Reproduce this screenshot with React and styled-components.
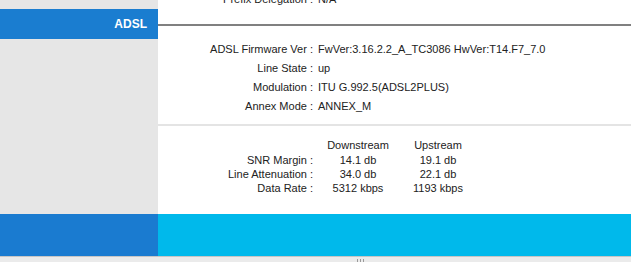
import React from "react";
import styled, { createGlobalStyle } from "styled-components";

const info = [
  { label: "ADSL Firmware Ver", value: "FwVer:3.16.2.2_A_TC3086 HwVer:T14.F7_7.0" },
  { label: "Line State", value: "up" },
  { label: "Modulation", value: "ITU G.992.5(ADSL2PLUS)" },
  { label: "Annex Mode", value: "ANNEX_M" },
];

const stats = [
  { label: "SNR Margin", down: "14.1 db", up: "19.1 db" },
  { label: "Line Attenuation", down: "34.0 db", up: "22.1 db" },
  { label: "Data Rate", down: "5312 kbps", up: "1193 kbps" },
];

const App = () => {
  return (
    <>
      <GlobalStyle />
      <Frame>
        <Scroller>
          <Section>
            <Side />
            <Content>
              <InfoRow>
                <Label>Prefix Delegation :</Label>
                <Value>N/A</Value>
              </InfoRow>
            </Content>
          </Section>

          <Section>
            <Title>ADSL</Title>
            <HeadLine>
              <Rule />
            </HeadLine>
          </Section>

          <Section>
            <Side />
            <Content $bottom={19}>
              <InfoBlock>
                {info.map((row) => (
                  <InfoRow key={row.label}>
                    <Label>{row.label} :</Label>
                    <Value>{row.value}</Value>
                  </InfoRow>
                ))}
              </InfoBlock>
              <Divider />
              <StatsTable>
                <StatHead />
                <StatHead $center>Downstream</StatHead>
                <StatHead $center>Upstream</StatHead>
                {stats.map((row) => (
                  <React.Fragment key={row.label}>
                    <StatLabel>{row.label} :</StatLabel>
                    <StatCell>{row.down}</StatCell>
                    <StatCell>{row.up}</StatCell>
                  </React.Fragment>
                ))}
              </StatsTable>
            </Content>
          </Section>

          <Footer>
            <FooterSide />
            <FooterMain />
          </Footer>
        </Scroller>
      </Frame>
      <StatusBar>
        <Grip>
          <span />
          <span />
          <span />
        </Grip>
      </StatusBar>
    </>
  );
};

export default App;

const GlobalStyle = createGlobalStyle`
  html, body {
    margin: 0;
    padding: 0;
    background: #ffffff;
    overflow: hidden;
  }
  body {
    font-family: "Liberation Sans", Arial, sans-serif;
    font-size: 11px;
    color: #222222;
  }
`;

const Frame = styled.div`
  height: 256px;
  overflow: hidden;
`;

const Scroller = styled.div`
  margin-top: -10px;
`;

const Section = styled.div`
  display: grid;
  grid-template-columns: 158px 1fr;
`;

const Side = styled.div`
  background: #e6e6e6;
`;

const Content = styled.div`
  background: #ffffff;
  padding-bottom: ${(p) => p.$bottom || 0}px;
`;

const Title = styled.div`
  height: 30px;
  background: #1a7dd0;
  color: #ffffff;
  font-weight: bold;
  font-size: 12px;
  line-height: 30px;
  text-align: right;
  padding-right: 11px;
`;

const HeadLine = styled.div`
  display: flex;
  align-items: center;
  padding-top: 1px;
`;

const Rule = styled.div`
  flex: 1;
  height: 2px;
  background: #808080;
`;

const InfoBlock = styled.div`
  padding-top: 1px;
  padding-bottom: 8px;
`;

const InfoRow = styled.div`
  display: grid;
  grid-template-columns: 155px 1fr;
  column-gap: 5px;
  height: 19px;
  line-height: 19px;
  white-space: nowrap;
`;

const Label = styled.div`
  text-align: right;
`;

const Value = styled.div``;

const Divider = styled.div`
  height: 2px;
  background: #e4e4e4;
`;

const StatsTable = styled.div`
  display: grid;
  grid-template-columns: 155px 90px 70px;
  grid-template-rows: 16px 14px 14px 14px;
  margin-top: 11px;
  white-space: nowrap;
`;

const StatHead = styled.div`
  line-height: 16px;
  text-align: ${(p) => (p.$center ? "center" : "right")};
`;

const StatLabel = styled.div`
  line-height: 14px;
  text-align: right;
`;

const StatCell = styled.div`
  line-height: 14px;
  text-align: center;
`;

const Footer = styled.div`
  display: grid;
  grid-template-columns: 158px 1fr;
  height: 42px;
`;

const FooterSide = styled.div`
  background: #1a7bd0;
`;

const FooterMain = styled.div`
  background: #00b9eb;
`;

const StatusBar = styled.div`
  height: 5px;
  border-top: 1px solid #c6c6c6;
  background: #ebebeb;
  position: relative;
`;

const Grip = styled.div`
  position: absolute;
  left: 357px;
  top: 2px;
  display: flex;
  gap: 2px;

  span {
    width: 1px;
    height: 3px;
    background: #9a9a9a;
  }
`;
